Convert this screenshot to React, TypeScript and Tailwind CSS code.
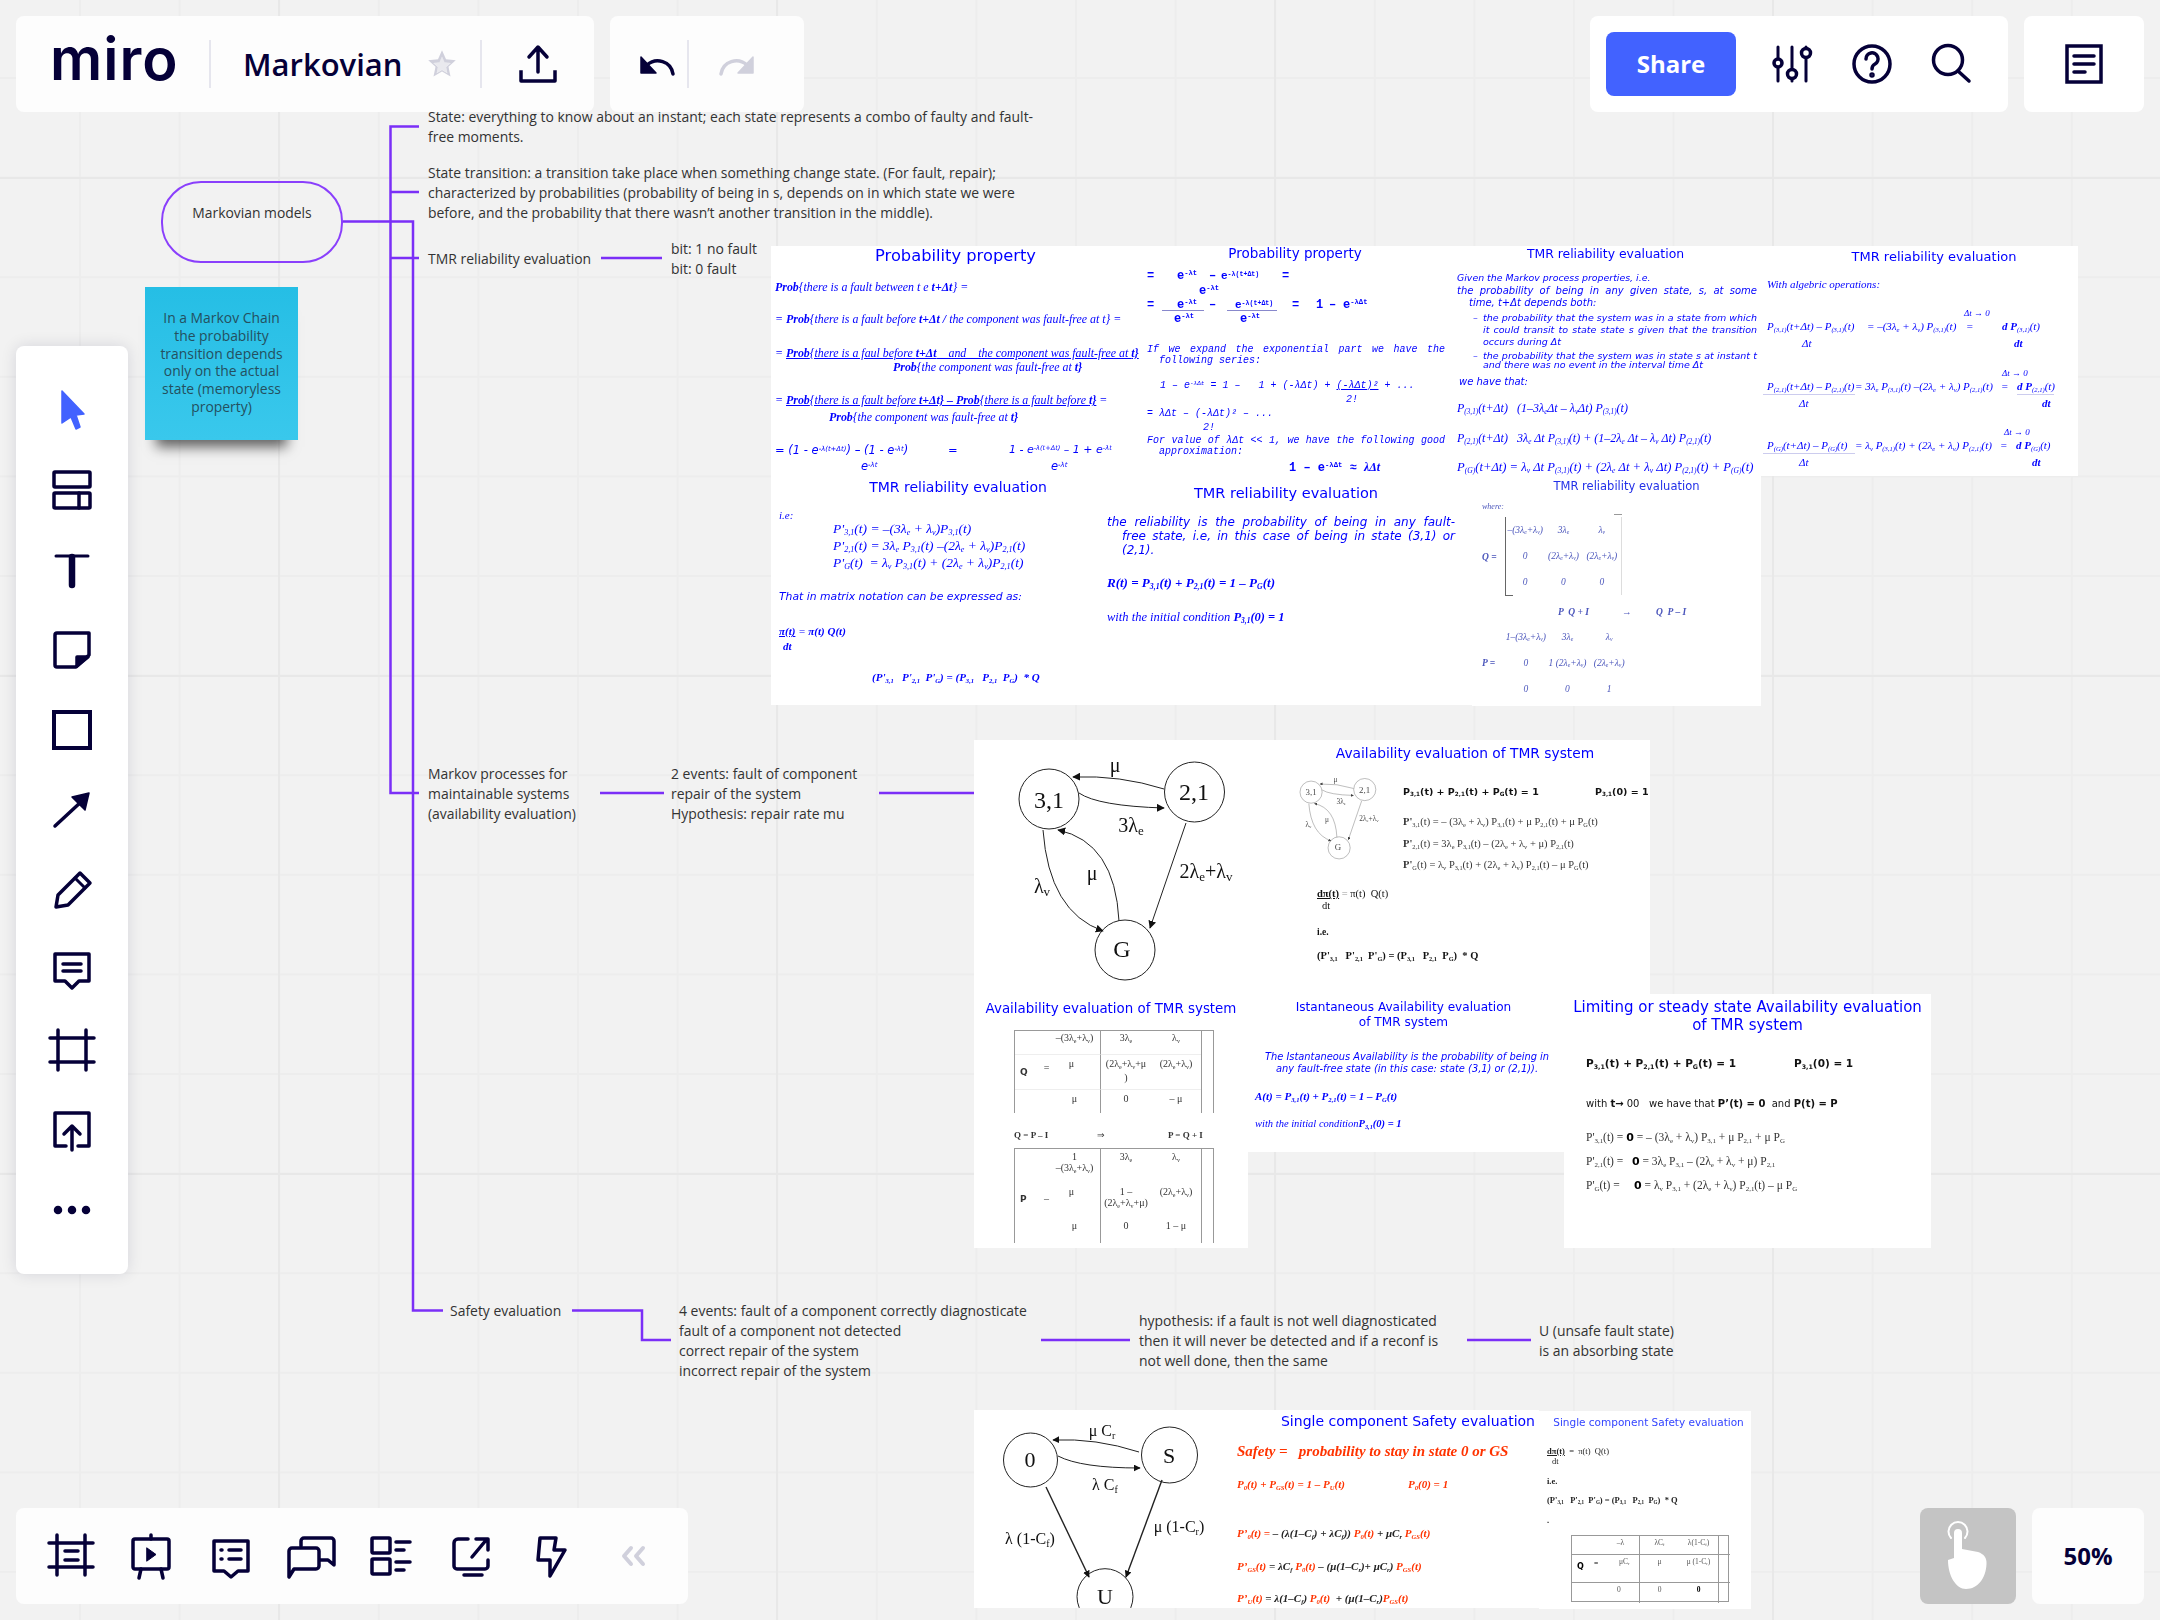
import React from "react";

const NAVY = "#050038";
const GREY = "#d0d0dc";

const Icon = ({ children, stroke = NAVY, className = "h-10 w-10" }: { children: React.ReactNode; stroke?: string; className?: string }) => (
  <svg viewBox="0 0 40 40" className={`shrink-0 overflow-visible ${className}`} fill="none" stroke={stroke} strokeWidth="3.5" strokeLinecap="round" strokeLinejoin="round">
    {children}
  </svg>
);

const Slide = ({ className, inner = "", children }: { className: string; inner?: string; children: React.ReactNode }) => (
  <div className={`absolute overflow-hidden bg-white ${className}`}>
    <div className={`flex h-full flex-col whitespace-pre text-[#0000ff] blur-[0.3px] [&_sub]:text-[60%] [&_sup]:text-[60%] ${inner}`}>{children}</div>
  </div>
);

const Title = ({ className, children }: { className: string; children: React.ReactNode }) => (
  <p className={`text-center font-['DejaVu_Sans',sans-serif] ${className}`}>{children}</p>
);

const Graph = () => (
  <>
    <defs>
      <marker id="tip" viewBox="0 0 10 10" refX="9" refY="5" markerWidth="8" markerHeight="8" markerUnits="userSpaceOnUse" orient="auto">
        <path d="M0 0L10 5L0 10Z" fill="#111" />
      </marker>
    </defs>
    <g fill="none" stroke="#222" strokeWidth="1">
      <circle cx="1049" cy="799" r="30" />
      <circle cx="1194.5" cy="792" r="30" />
      <circle cx="1125" cy="950" r="30" />
      <path d="M1164 789Q1120 775 1073 777" markerEnd="url(#tip)" />
      <path d="M1079 793Q1098 806 1164 808" markerEnd="url(#tip)" />
      <path d="M1119 921Q1115 842 1058 830" markerEnd="url(#tip)" />
      <path d="M1043 830Q1049 912 1103 931" markerEnd="url(#tip)" />
      <path d="M1186 823L1150 928" markerEnd="url(#tip)" />
    </g>
    <g fill="#111" stroke="none" className="font-['Liberation_Serif',serif]" fontSize="24" textAnchor="middle">
      <text x="1049" y="808">3,1</text>
      <text x="1194" y="800">2,1</text>
      <text x="1122" y="957">G</text>
      <text x="1115" y="772" fontSize="20">μ</text>
      <text x="1131" y="832" fontSize="20">3λ<tspan fontSize="13" dy="3">e</tspan></text>
      <text x="1092" y="880" fontSize="20">μ</text>
      <text x="1042" y="893" fontSize="20">λ<tspan fontSize="13" dy="3">v</tspan></text>
      <text x="1206" y="878" fontSize="20">2λ<tspan fontSize="13" dy="3">e</tspan><tspan dy="-3">+λ</tspan><tspan fontSize="13" dy="3">v</tspan></text>
    </g>
  </>
);

const SafetyGraph = () => (
  <svg viewBox="974 1410 256 198" className="absolute left-0 top-0 h-[198px] w-[256px]">
    <defs>
      <marker id="tip2" viewBox="0 0 10 10" refX="9" refY="5" markerWidth="7" markerHeight="7" markerUnits="userSpaceOnUse" orient="auto">
        <path d="M0 0L10 5L0 10Z" fill="#111" />
      </marker>
    </defs>
    <g fill="none" stroke="#222" strokeWidth="1">
      <circle cx="1030.5" cy="1460" r="27" />
      <circle cx="1169.5" cy="1455" r="28" />
      <circle cx="1105" cy="1596.7" r="28" />
      <path d="M1139 1452Q1096 1438 1053 1440" markerEnd="url(#tip2)" />
      <path d="M1058 1456Q1081 1468 1140 1468" markerEnd="url(#tip2)" />
      <path d="M1046 1487L1089 1577" markerEnd="url(#tip2)" strokeWidth="1.4" />
      <path d="M1162 1480L1126 1577" markerEnd="url(#tip2)" strokeWidth="1.4" />
    </g>
    <g fill="#111" className="font-['Liberation_Serif',serif] font-normal not-italic" fontSize="16" textAnchor="middle">
      <text x="1030" y="1467" fontSize="22">0</text>
      <text x="1169" y="1463" fontSize="22">S</text>
      <text x="1105" y="1604" fontSize="22">U</text>
      <text x="1102" y="1436">μ C<tspan fontSize="10" dy="3">r</tspan></text>
      <text x="1105" y="1490">λ C<tspan fontSize="10" dy="3">f</tspan></text>
      <text x="1030" y="1544">λ (1-C<tspan fontSize="10" dy="3">f</tspan><tspan dy="-3">)</tspan></text>
      <text x="1179" y="1532">μ (1-C<tspan fontSize="10" dy="3">r</tspan><tspan dy="-3">)</tspan></text>
    </g>
  </svg>
);

const TableCell = ({ children, className = "" }: { children?: React.ReactNode; className?: string }) => (
  <div className={`text-center ${className}`}>{children}</div>
);

const App = () => {
  return (
    <div className="relative h-[1620px] w-[2160px] overflow-hidden bg-[#f2f2f2] font-['Open_Sans',sans-serif] [background-image:linear-gradient(90deg,#e8e8e8_2px,transparent_2px),linear-gradient(#e8e8e8_2px,transparent_2px),linear-gradient(90deg,#ededed_2px,transparent_2px),linear-gradient(#ededed_2px,transparent_2px)] [background-size:498px_498px,498px_498px,99.6px_99.6px,99.6px_99.6px] [background-position:278px_177px,278px_177px,79px_77px,79px_77px]">
      {/* connectors of the mind map */}
      <svg viewBox="0 0 2160 1620" className="absolute left-0 top-0 h-[1620px] w-[2160px]" fill="none" stroke="#7b2ff7" strokeWidth="2.5">
        <path d="M419 126.5H390.5V793H419M390.5 192H419M390.5 258H419" />
        <path d="M343 221.5H413V1310.5H443" />
        <path d="M601 258H662M600 793H664M879 793H974" />
        <path d="M572 1310.5H642V1340H671M1041 1340H1130M1467 1340H1531" />
      </svg>

      {/* mind map nodes */}
      <div className="absolute left-[161px] top-[181px] h-[82px] w-[182px] rounded-[40px] border-[2.5px] border-[#8a3ffc] pt-[20px] text-center text-[13.9px] leading-5 text-[#333]">
        Markovian models
      </div>
      <div className="absolute left-[145px] top-[287px] h-[153px] w-[153px] bg-gradient-to-b from-[#25bee5] to-[#39c8ec] px-2 pt-[22px] text-center text-[13.9px] leading-[17.8px] text-[#24505f] shadow-[0_18px_12px_-11px_rgba(0,0,0,0.6)]">
        In a Markov Chain the probability transition depends only on the actual state (memoryless property)
      </div>
      <div className="text-[13.95px] leading-5 text-[#333]">
        <p className="absolute left-[428px] top-[107px] whitespace-nowrap">State: everything to know about an instant; each state represents a combo of faulty and fault-<br />free moments.</p>
        <p className="absolute left-[428px] top-[163px] whitespace-nowrap">State transition: a transition take place when something change state. (For fault, repair);<br />characterized by probabilities (probability of being in s, depends on in which state we were<br />before, and the probability that there wasn’t another transition in the middle).</p>
        <p className="absolute left-[428px] top-[249px] whitespace-nowrap">TMR reliability evaluation</p>
        <p className="absolute left-[671px] top-[239px] whitespace-nowrap">bit: 1 no fault<br />bit: 0 fault</p>
        <p className="absolute left-[428px] top-[764px] whitespace-nowrap">Markov processes for<br />maintainable systems<br />(availability evaluation)</p>
        <p className="absolute left-[671px] top-[764px] whitespace-nowrap">2 events: fault of component<br />repair of the system<br />Hypothesis: repair rate mu</p>
        <p className="absolute left-[450px] top-[1301px] whitespace-nowrap">Safety evaluation</p>
        <p className="absolute left-[679px] top-[1301px] whitespace-nowrap">4 events: fault of a component correctly diagnosticate<br />fault of a component not detected<br />correct repair of the system<br />incorrect repair of the system</p>
        <p className="absolute left-[1139px] top-[1311px] whitespace-nowrap">hypothesis: if a fault is not well diagnosticated<br />then it will never be detected and if a reconf is<br />not well done, then the same</p>
        <p className="absolute left-[1539px] top-[1321px] whitespace-nowrap">U (unsafe fault state)<br />is an absorbing state</p>
      </div>

      {/* Probability property */}
      <Slide className="left-[771px] top-[246px] h-[234px] w-[369px]" inner="font-['Liberation_Serif',serif] italic text-[11.9px]">
        <Title className="h-5 text-[16.3px] leading-5 not-italic">Probability property</Title>
        <p className="ml-1 mt-[14px] h-[14px] leading-[14px]"><b>Prob</b>{"{there is a fault between t e "}<b>t+Δt</b>{"} ="}</p>
        <p className="ml-1 mt-[18px] h-[14px] leading-[14px]">= <b>Prob</b>{"{there is a fault before "}<b>t+Δt / </b>{"the component was fault-free at t} ="}</p>
        <p className="ml-1 mt-[20px] h-[14px] leading-[14px]">= <span className="underline"><b>Prob</b>{"{there is a faul before "}<b>t+Δt</b>{"    and    the component was fault-free at "}<b>{"t}"}</b></span></p>
        <p className="ml-[122px] h-[14px] leading-[14px]"><b>Prob</b>{"{the component was fault-free at "}<b>{"t}"}</b></p>
        <p className="ml-1 mt-[19px] h-[14px] leading-[14px]">= <span className="underline"><b>Prob</b>{"{there is a fault before "}<b>{"t+Δt} – Prob"}</b>{"{there is a fault before "}<b>{"t}"}</b></span> =</p>
        <p className="ml-[58px] mt-[3px] h-[14px] leading-[14px]"><b>Prob</b>{"{the component was fault-free at "}<b>{"t}"}</b></p>
        <div className="ml-1 mt-[19px] flex h-[14px] font-['DejaVu_Sans',sans-serif] text-[11.5px] leading-[14px]">
          <span className="w-[173px]">= (1 - e<sup>-λ(t+Δt)</sup>) – (1 - e<sup>-λt</sup>)</span>
          <span className="w-[61px]">=</span>
          <span className="text-[11px]">1 - e<sup>-λ(t+Δt)</sup> – 1 + e<sup>-λt</sup></span>
        </div>
        <div className="ml-[90px] mt-[2px] flex h-[14px] font-['DejaVu_Sans',sans-serif] text-[11.5px] leading-[14px]">
          <span className="w-[190px]">e<sup>-λt</sup></span>
          <span>e<sup>-λt</sup></span>
        </div>
      </Slide>

      <Slide className="left-[1140px] top-[246px] h-[234px] w-[310px]" inner="pl-[7px] font-['Liberation_Mono',monospace] italic text-[10px]">
        <Title className="-ml-[7px] h-[14px] text-[13.5px] leading-[14px] not-italic">Probability property</Title>
        <div className="mt-[10px] flex h-3 text-[12px] font-bold leading-3 not-italic">
          <span className="w-[30px]">=</span><span className="w-[32px]">e<sup>-λt</sup></span><span className="w-[12px]">–</span><span className="w-[61px] text-[11px]">e<sup>-λ(t+Δt)</sup></span><span>=</span>
        </div>
        <p className="ml-[52px] mt-[3px] h-3 text-[12px] font-bold leading-3 not-italic">e<sup>-λt</sup></p>
        <div className="mt-[2px] flex h-3 text-[12px] font-bold leading-3 not-italic">
          <span className="w-[15px]">=</span><span className="w-[42px] border-b border-[#8888cc] pl-[15px]">e<sup>-λt</sup></span><span className="w-[23px] pl-[5px]">–</span><span className="w-[50px] border-b border-[#8888cc] pl-[8px] text-[11px]">e<sup>-λ(t+Δt)</sup></span><span className="w-[15px] pl-[15px]" /><span className="w-[24px]">=</span><span className="w-[13px]">1</span><span className="w-[14px]">–</span><span>e<sup>-λΔt</sup></span>
        </div>
        <div className="mt-[2px] flex h-3 text-[12px] font-bold leading-3 not-italic">
          <span className="ml-[27px] w-[66px]">e<sup>-λt</sup></span><span>e<sup>-λt</sup></span>
        </div>
        <p className="mt-[19px] h-3 w-[298px] whitespace-normal leading-3 [text-align-last:justify]">If we expand the exponential part we have the</p>
        <p className="-mt-px ml-3 h-3 leading-3">following series:</p>
        <p className="ml-[13px] mt-[13px] h-3 leading-3">1 – e<sup>-λΔt</sup> = 1 –   1 + (-λΔt) + <span className="underline">(-λΔt)²</span> + ...</p>
        <p className="ml-[199px] mt-[2px] h-3 leading-3">2!</p>
        <p className="mt-[2px] h-3 leading-3">= λΔt – (-λΔt)² – ...</p>
        <p className="ml-14 mt-[2px] h-3 leading-3">2!</p>
        <p className="mt-px h-3 w-[298px] whitespace-normal leading-3 [text-align-last:justify]">For value of λΔt &lt;&lt; 1, we have the following good</p>
        <p className="-mt-px ml-3 h-3 leading-3">approximation:</p>
        <p className="ml-[142px] mt-[3px] h-3 text-[12px] font-bold leading-3 not-italic">1 – e<sup>-λΔt</sup> ≈ <span className="font-['Liberation_Serif',serif] italic">λΔt</span></p>
      </Slide>

      <Slide className="left-[1450px] top-[246px] h-[234px] w-[311px]" inner="pl-[7px] font-['DejaVu_Sans',sans-serif] italic text-[9.5px]">
        <Title className="-ml-[7px] h-[15px] text-[12.4px] leading-[15px] not-italic">TMR reliability evaluation</Title>
        <p className="mt-[11px] h-3 text-[9.4px] leading-3">Given the Markov process properties, i.e.</p>
        <p className="mt-px h-3 w-[300px] whitespace-normal text-[10px] leading-3 [text-align-last:justify]">the probability of being in any given state, s, at some</p>
        <p className="ml-3 h-3 text-[10px] leading-3">time, t+Δt depends both:</p>
        <p className="ml-[16px] mt-[3px] flex h-3 w-[284px] whitespace-normal leading-3"><span className="w-[10px]">–</span><span className="flex-1 [text-align-last:justify]">the probability that the system was in a state from which</span></p>
        <p className="ml-[26px] h-3 w-[274px] whitespace-normal leading-3 [text-align-last:justify]">it could transit to state state s given that the transition</p>
        <p className="ml-[26px] h-3 leading-3">occurs during Δt</p>
        <p className="ml-[16px] mt-[2px] flex h-3 w-[284px] whitespace-normal leading-3"><span className="w-[10px]">–</span><span className="flex-1 [text-align-last:justify]">the probability that the system was in state s at instant t</span></p>
        <p className="ml-[26px] -mt-[3px] h-3 leading-3">and there was no event in the interval time Δt</p>
        <p className="ml-[2px] mt-[5px] h-3 text-[10px] leading-3">we have that:</p>
        <div className="font-['Liberation_Serif',serif] text-[12px]">
          <p className="mt-[13px] h-[14px] leading-[14px]">P<sub>(3,1)</sub>(t+Δt)   (1–3λ<sub>e</sub>Δt – λ<sub>v</sub>Δt) P<sub>(3,1)</sub>(t)</p>
          <p className="mt-[16px] h-[14px] leading-[14px]">P<sub>(2,1)</sub>(t+Δt)   3λ<sub>e</sub> Δt P<sub>(3,1)</sub>(t) + (1–2λ<sub>e</sub> Δt – λ<sub>v</sub> Δt) P<sub>(2,1)</sub>(t)</p>
          <p className="mt-[15px] h-[14px] text-[12.6px] leading-[14px]">P<sub>(G)</sub>(t+Δt) = λ<sub>v</sub> Δt P<sub>(3,1)</sub>(t) + (2λ<sub>e</sub> Δt + λ<sub>v</sub> Δt) P<sub>(2,1)</sub>(t) + P<sub>(G)</sub>(t)</p>
        </div>
      </Slide>

      <Slide className="left-[1761px] top-[246px] h-[230px] w-[317px]" inner="pl-[6px] font-['Liberation_Serif',serif] italic text-[11px]">
        <Title className="mt-1 h-[14px] pl-[23px] text-[13px] leading-[14px] not-italic">TMR reliability evaluation</Title>
        <p className="mt-[14px] h-3 leading-3">With algebric operations:</p>
        <p className="ml-[197px] mt-[18px] h-[10px] text-[9px] leading-[10px]">Δt → 0</p>
        <div className="mt-[2px] flex h-3 leading-3">
          <span className="w-[100px]">P<sub>(3,1)</sub>(t+Δt) – P<sub>(3,1)</sub>(t)</span><span className="w-[99px]">= –(3λ<sub>e</sub> + λ<sub>v</sub>) P<sub>(3,1)</sub>(t)</span><span className="w-[36px]">=</span><span><b>d P</b><sub>(3,1)</sub>(t)</span>
        </div>
        <div className="mt-[5px] flex h-3 font-bold leading-3"><span className="ml-[35px] w-[212px] font-normal">Δt</span><span>dt</span></div>
        <p className="ml-[235px] mt-[19px] h-[10px] text-[9px] leading-[10px]">Δt → 0</p>
        <div className="mt-[2px] flex h-[15px] leading-3">
          <span className="-ml-[4px] w-[92px] border-b border-[#ccccee] pl-[4px]">P<sub>(2,1)</sub>(t+Δt) – P<sub>(2,1)</sub>(t)</span><span className="w-[146px]">= 3λ<sub>e</sub> P<sub>(3,1)</sub>(t) –(2λ<sub>e</sub> + λ<sub>v</sub>) P<sub>(2,1)</sub>(t)</span><span className="w-[16px]">=</span><span className="w-[37px] border-b border-[#ccccee]"><b>d P</b><sub>(2,1)</sub>(t)</span>
        </div>
        <div className="mt-[2px] flex h-3 font-bold leading-3"><span className="ml-[32px] w-[243px] font-normal">Δt</span><span>dt</span></div>
        <p className="ml-[237px] mt-[18px] h-[10px] text-[9px] leading-[10px]">Δt → 0</p>
        <div className="mt-[2px] flex h-[15px] leading-3">
          <span className="-ml-[4px] w-[92px] border-b border-[#ccccee] pl-[4px]">P<sub>(G)</sub>(t+Δt) – P<sub>(G)</sub>(t)</span><span className="w-[145px]">= λ<sub>v</sub> P<sub>(3,1)</sub>(t) + (2λ<sub>e</sub> + λ<sub>v</sub>) P<sub>(2,1)</sub>(t)</span><span className="w-[16px]">=</span><span><b>d P</b><sub>(G)</sub>(t)</span>
        </div>
        <div className="mt-[2px] flex h-3 font-bold leading-3"><span className="ml-[32px] w-[233px] font-normal">Δt</span><span>dt</span></div>
      </Slide>

      {/* TMR reliability evaluation, second row */}
      <Slide className="left-[771px] top-[480px] h-[225px] w-[329px]" inner="pl-2 font-['Liberation_Serif',serif] italic text-[13.5px]">
        <Title className="-ml-2 h-[14px] pl-[45px] text-[14px] leading-[14px] not-italic">TMR reliability evaluation</Title>
        <p className="mt-[15px] h-3 text-[11px] leading-3">i.e:</p>
        <div className="ml-[54px]">
          <p className="h-4 leading-4">P'<sub>3,1</sub>(t) = –(3λ<sub>e</sub> + λ<sub>v</sub>)P<sub>3,1</sub>(t)</p>
          <p className="mt-px h-4 leading-4">P'<sub>2,1</sub>(t) = 3λ<sub>e</sub> P<sub>3,1</sub>(t) –(2λ<sub>e</sub> + λ<sub>v</sub>)P<sub>2,1</sub>(t)</p>
          <p className="mt-px h-4 leading-4">P'<sub>G</sub>(t)  = λ<sub>v</sub> P<sub>3,1</sub>(t) + (2λ<sub>e</sub> + λ<sub>v</sub>)P<sub>2,1</sub>(t)</p>
        </div>
        <p className="mt-[20px] h-3 font-['DejaVu_Sans',sans-serif] text-[10.8px] leading-3">That in matrix notation can be expressed as:</p>
        <p className="mt-[22px] h-3 text-[11px] font-bold leading-3"><span className="underline">π(t)</span> <span className="font-normal">=</span> π(t) Q(t)</p>
        <p className="ml-1 mt-[3px] h-3 text-[11px] font-bold leading-3">dt</p>
        <p className="ml-[93px] mt-[19px] h-3 text-[11px] font-bold leading-3">(P'<sub>3,1</sub>   P'<sub>2,1</sub>  P'<sub>G</sub>) = (P<sub>3,1</sub>   P<sub>2,1</sub>  P<sub>G</sub>)  * Q</p>
      </Slide>

      <Slide className="left-[1100px] top-[480px] h-[225px] w-[372px]" inner="pl-[7px] font-['DejaVu_Sans',sans-serif] italic text-[12px]">
        <Title className="-ml-[7px] mt-[5px] h-4 text-[14.5px] leading-4 not-italic">TMR reliability evaluation</Title>
        <p className="mt-[14px] h-[14px] w-[348px] whitespace-normal leading-[14px] [text-align-last:justify]">the reliability is the probability of being in any fault-</p>
        <p className="ml-[15px] h-[14px] w-[333px] whitespace-normal leading-[14px] [text-align-last:justify]">free state, i.e, in this case of being in state (3,1) or</p>
        <p className="ml-[15px] h-[14px] leading-[14px]">(2,1).</p>
        <p className="mt-[19px] h-[14px] font-['Liberation_Serif',serif] text-[13px] font-bold leading-[14px]">R(t) = P<sub>3,1</sub>(t) + P<sub>2,1</sub>(t) = 1 – P<sub>G</sub>(t)</p>
        <p className="mt-[20px] h-[14px] font-['Liberation_Serif',serif] text-[12.5px] leading-[14px]">with the initial condition <b>P<sub>3,1</sub>(0) = 1</b></p>
      </Slide>

      <Slide className="left-[1472px] top-[476px] h-[230px] w-[289px]" inner="font-['Liberation_Serif',serif] italic text-[9.5px] text-[#4a55bb]">
        <Title className="mt-[3px] h-[14px] pl-5 text-[11.5px] leading-[14px] not-italic text-[#2230e8]">TMR reliability evaluation</Title>
        <p className="ml-[10px] mt-[9px] h-[10px] text-[8px] leading-[10px]">where:</p>
        <div className="ml-[10px] mt-[5px] flex h-[80px]">
          <span className="w-[23px] self-center font-bold">Q =</span>
          <div className="relative grid h-[78px] w-[117px] grid-cols-3 grid-rows-3 items-center border-l-[1.5px] border-r border-l-[#666] border-r-[#ddd] text-center">
            <span>–(3λ<sub>e</sub>+λ<sub>v</sub>)</span><span>3λ<sub>e</sub></span><span>λ<sub>v</sub></span>
            <span>0</span><span>(2λ<sub>e</sub>+λ<sub>v</sub>)</span><span>(2λ<sub>e</sub>+λ<sub>v</sub>)</span>
            <span>0</span><span>0</span><span>0</span>
            <span className="absolute -bottom-px -left-px h-px w-2 bg-[#666]" />
            <span className="absolute -right-px -top-[3px] h-px w-2 bg-[#999]" />
          </div>
        </div>
        <div className="ml-[86px] mt-[9px] flex h-3 font-bold leading-3">
          <span className="w-[64px]">P  Q + I</span><span className="w-[34px] font-normal">→</span><span>Q  P – I</span>
        </div>
        <div className="ml-[10px] mt-[6px] flex h-[78px]">
          <span className="w-[23px] self-center font-bold">P =</span>
          <div className="relative grid h-[78px] w-[125px] grid-cols-3 grid-rows-3 items-center text-center">
            <span>1–(3λ<sub>e</sub>+λ<sub>v</sub>)</span><span>3λ<sub>e</sub></span><span>λ<sub>v</sub></span>
            <span>0</span><span>1 (2λ<sub>e</sub>+λ<sub>v</sub>)</span><span>(2λ<sub>e</sub>+λ<sub>v</sub>)</span>
            <span>0</span><span>0</span><span>1</span>
          </div>
        </div>
      </Slide>

      {/* Availability evaluation */}
      <Slide className="left-[974px] top-[740px] h-[254px] w-[266px]" inner="">
        <svg viewBox="974 740 266 254" className="h-[254px] w-[266px]"><Graph /></svg>
      </Slide>
      <Slide className="left-[1240px] top-[740px] h-[254px] w-[410px]" inner="font-['DejaVu_Sans',sans-serif] text-[#111]">
        <Title className="mt-[5px] h-4 pl-10 text-[13.8px] leading-4 text-[#0000ff]">Availability evaluation of TMR system</Title>
        <p className="ml-[163px] mt-[25px] flex h-3 text-[9.5px] font-bold leading-3"><span className="w-[192px]">P<sub>3,1</sub>(t) + P<sub>2,1</sub>(t) + P<sub>G</sub>(t) = 1</span><span>P<sub>3,1</sub>(0) = 1</span></p>
        <div className="ml-[163px] font-['Liberation_Serif',serif] text-[10.5px] text-[#333]">
          <p className="mt-[18px] h-3 leading-3"><b>P'</b><sub>3,1</sub>(t) = – (3λ<sub>e</sub> + λ<sub>v</sub>) P<sub>3,1</sub>(t) + μ P<sub>2,1</sub>(t) + μ P<sub>G</sub>(t)</p>
          <p className="mt-[10px] h-3 leading-3"><b>P'</b><sub>2,1</sub>(t) = 3λ<sub>e</sub> P<sub>3,1</sub>(t) – (2λ<sub>e</sub> + λ<sub>v</sub> + μ) P<sub>2,1</sub>(t)</p>
          <p className="mt-[9px] h-3 leading-3"><b>P'</b><sub>G</sub>(t) = λ<sub>v</sub> P<sub>3,1</sub>(t) + (2λ<sub>e</sub> + λ<sub>v</sub>) P<sub>2,1</sub>(t) – μ P<sub>G</sub>(t)</p>
        </div>
        <div className="ml-[77px] font-['Liberation_Serif',serif] text-[10.5px] font-bold">
          <p className="mt-[17px] h-3 leading-3"><span className="underline">dπ(t)</span> <span className="font-normal text-[#999]">=</span> <span className="font-normal">π(t)  Q(t)</span></p>
          <p className="ml-[5px] h-3 font-normal leading-3">dt</p>
          <p className="mt-[14px] h-3 text-[9.5px] leading-3">i.e.</p>
          <p className="mt-3 h-3 leading-3">(P'<sub>3,1</sub>   P'<sub>2,1</sub>  P'<sub>G</sub>) = (P<sub>3,1</sub>   P<sub>2,1</sub>  P<sub>G</sub>)  * Q</p>
        </div>
      </Slide>
      {/* small copy of the state graph */}
      <svg viewBox="1019 769 206 211" className="absolute left-[1300px] top-[781px] h-[78px] w-[76px] overflow-visible opacity-80">
        <Graph />
      </svg>

      <Slide className="left-[974px] top-[994px] h-[254px] w-[274px]" inner="font-['Liberation_Serif',serif] text-[10px] text-[#333]">
        <Title className="mt-[7px] h-4 text-[13.4px] leading-4 text-[#0000ff]">Availability evaluation of TMR system</Title>
        <div className="ml-10 mt-[13px] w-[200px] border-t border-[#999]">
          <div className="grid h-[82px] grid-cols-[85px_101px_14px] grid-rows-[23px_35px_24px] border-x border-[#999] leading-[14px]">
            <TableCell className="pl-[34px]">–(3λ<sub>e</sub>+λ<sub>v</sub>)</TableCell>
            <TableCell className="grid grid-cols-2 border-l border-[#999]"><span>3λ<sub>e</sub></span><span>λ<sub>v</sub></span></TableCell>
            <TableCell className="border-l border-[#999]" />
            <TableCell className="flex border-t border-[#eee] pl-[5px] pt-[2px]"><span className="mt-[8px] w-[23px] text-left font-['DejaVu_Sans',sans-serif] text-[9px] font-bold">Q</span><span className="mt-[4px] w-[7px]">=</span><span className="w-[24px] text-right">μ</span></TableCell>
            <TableCell className="grid grid-cols-2 border-l border-t border-[#eee] border-l-[#999] pt-[2px]"><span>(2λ<sub>e</sub>+λ<sub>v</sub>+μ<br />)</span><span>(2λ<sub>e</sub>+λ<sub>v</sub>)</span></TableCell>
            <TableCell className="border-l border-[#999]" />
            <TableCell className="border-t border-[#eee] pl-[34px] pt-[2px]">μ</TableCell>
            <TableCell className="grid grid-cols-2 border-l border-t border-[#eee] border-l-[#999] pt-[2px]"><span>0</span><span>– μ</span></TableCell>
            <TableCell className="border-l border-[#999]" />
          </div>
        </div>
        <div className="ml-10 mt-[16px] flex h-3 font-bold leading-3 text-[9px]"><span className="w-[83px]">Q = P – I</span><span className="w-[71px] font-normal">⇒</span><span>P = Q + I</span></div>
        <div className="ml-10 mt-[7px] w-[200px] border-t border-[#999]">
          <div className="grid h-[94px] grid-cols-[85px_101px_14px] grid-rows-[35px_34px_25px] border-x border-[#999] leading-[11px]">
            <TableCell className="pl-[34px] pt-[2px]">1<br />–(3λ<sub>e</sub>+λ<sub>v</sub>)</TableCell>
            <TableCell className="grid grid-cols-2 border-l border-[#999] pt-[2px]"><span>3λ<sub>e</sub></span><span>λ<sub>v</sub></span></TableCell>
            <TableCell className="border-l border-[#999]" />
            <TableCell className="flex pl-[5px] pt-[2px]"><span className="mt-[8px] w-[23px] text-left font-['DejaVu_Sans',sans-serif] text-[9px] font-bold">P</span><span className="mt-[7px] w-[7px]">–</span><span className="w-[24px] text-right">μ</span></TableCell>
            <TableCell className="grid grid-cols-2 border-l border-[#999] pt-[2px]"><span>1 –<br />(2λ<sub>e</sub>+λ<sub>v</sub>+μ)</span><span>(2λ<sub>e</sub>+λ<sub>v</sub>)</span></TableCell>
            <TableCell className="border-l border-[#999]" />
            <TableCell className="pl-[34px] pt-[2px]">μ</TableCell>
            <TableCell className="grid grid-cols-2 border-l border-[#999] pt-[2px]"><span>0</span><span>1 – μ</span></TableCell>
            <TableCell className="border-l border-[#999]" />
          </div>
        </div>
      </Slide>

      <Slide className="left-[1248px] top-[994px] h-[158px] w-[316px]" inner="font-['DejaVu_Sans',sans-serif]">
        <Title className="mt-[6px] h-[29px] pr-[5px] text-[12.1px] leading-[14.5px]">Istantaneous Availability evaluation<br />of TMR system</Title>
        <p className="ml-[7px] mt-[22px] w-[304px] text-center text-[9.85px] italic leading-3">The Istantaneous Availability is the probability of being in<br />any fault-free state (in this case: state (3,1) or (2,1)).</p>
        <p className="ml-[7px] mt-[14px] h-[14px] font-['Liberation_Serif',serif] text-[11px] font-bold italic leading-[14px]">A(t) = P<sub>3,1</sub>(t) + P<sub>2,1</sub>(t) = 1 – P<sub>G</sub>(t)</p>
        <p className="ml-[7px] mt-[14px] h-[14px] font-['Liberation_Serif',serif] text-[10.5px] italic leading-[14px]">with the initial condition<b>P<sub>3,1</sub>(0) = 1</b></p>
      </Slide>

      <Slide className="left-[1564px] top-[994px] h-[254px] w-[367px]" inner="font-['DejaVu_Sans',sans-serif] text-[#111]">
        <Title className="mt-1 h-9 text-[15px] leading-[18px] text-[#0000ff]">Limiting or steady state Availability evaluation<br />of TMR system</Title>
        <p className="ml-[22px] mt-[22px] flex h-[14px] text-[10.5px] font-bold leading-[14px]"><span className="w-[208px]">P<sub>3,1</sub>(t) + P<sub>2,1</sub>(t) + P<sub>G</sub>(t) = 1</span><span>P<sub>3,1</sub>(0) = 1</span></p>
        <p className="ml-[22px] mt-[27px] h-[14px] text-[10px] leading-[14px]">with <b>t→</b> 00   we have that <b>P’(t) = 0</b>  and <b>P(t) = P</b></p>
        <div className="ml-[22px] font-['Liberation_Serif',serif] text-[11.5px] text-[#333]">
          <p className="mt-[19px] h-[14px] leading-[14px]">P'<sub>3,1</sub>(t) = <b className="font-['DejaVu_Sans',sans-serif] text-[11px] text-black">0</b> = – (3λ<sub>e</sub> + λ<sub>v</sub>) P<sub>3,1</sub> + μ P<sub>2,1</sub> + μ P<sub>G</sub></p>
          <p className="mt-[10px] h-[14px] leading-[14px]">P'<sub>2,1</sub>(t) =   <b className="font-['DejaVu_Sans',sans-serif] text-[11px] text-black">0</b> = 3λ<sub>e</sub> P<sub>3,1</sub> – (2λ<sub>e</sub> + λ<sub>v</sub> + μ) P<sub>2,1</sub></p>
          <p className="mt-[10px] h-[14px] leading-[14px]">P'<sub>G</sub>(t) =     <b className="font-['DejaVu_Sans',sans-serif] text-[11px] text-black">0</b> = λ<sub>v</sub> P<sub>3,1</sub> + (2λ<sub>e</sub> + λ<sub>v</sub>) P<sub>2,1</sub>(t) – μ P<sub>G</sub></p>
        </div>
      </Slide>

      {/* Safety evaluation */}
      <Slide className="left-[974px] top-[1410px] h-[198px] w-[565px]" inner="pl-[263px] font-['Liberation_Serif',serif] font-bold italic text-[11px] text-[#ff3300]">
        <SafetyGraph />
        <Title className="mt-[3px] h-4 w-[302px] pl-10 text-[14px] font-normal leading-4 not-italic text-[#0000ff]">Single component Safety evaluation</Title>
        <p className="mt-[14px] h-4 text-[15px] leading-4">Safety =   probability to stay in state 0 or GS</p>
        <p className="mt-[18px] flex h-[14px] leading-[14px]"><span className="w-[171px]">P<sub>0</sub>(t) + P<sub>GS</sub>(t) = 1 – P<sub>U</sub>(t)</span><span>P<sub>0</sub>(0) = 1</span></p>
        <p className="mt-[35px] h-[14px] leading-[14px]">P’<sub>0</sub>(t) = <span className="text-[#222]">– (λ(1–C<sub>f</sub>) + λC<sub>f</sub>))</span> P<sub>0</sub>(t) <span className="text-[#222]">+ μC<sub>r</sub></span> P<sub>GS</sub>(t)</p>
        <p className="mt-[19px] h-[14px] leading-[14px]">P’<sub>GS</sub>(t) <span className="text-[#222]">= λC<sub>f</sub></span> P<sub>0</sub>(t) <span className="text-[#222]">– (μ(1–C<sub>r</sub>)+ μC<sub>r</sub>)</span> P<sub>GS</sub>(t)</p>
        <p className="mt-[18px] h-[14px] leading-[14px]">P’<sub>U</sub>(t) <span className="text-[#222]">= λ(1–C<sub>f</sub>)</span> P<sub>0</sub>(t)  <span className="text-[#222]">+ (μ(1–C<sub>r</sub>)</span>P<sub>GS</sub>(t)</p>
      </Slide>

      <Slide className="left-[1539px] top-[1411px] h-[198px] w-[212px]" inner="pl-2 font-['Liberation_Serif',serif] text-[8.5px] font-bold text-[#222]">
        <Title className="-ml-2 mt-1 h-[14px] pl-[7px] text-[10.5px] font-normal leading-[14px] text-[#3344ff]">Single component Safety evaluation</Title>
        <p className="mt-[16.7px] h-[10px] leading-[10px]"><span className="underline">dπ(t)</span>  =  <span className="font-normal">π(t)  Q(t)</span></p>
        <p className="ml-[5px] h-[10px] font-normal leading-[10px]">dt</p>
        <p className="mt-[10px] h-[10px] leading-[10px]">i.e.</p>
        <p className="mt-[9px] h-[10px] leading-[10px]">(P'<sub>3,1</sub>   P'<sub>2,1</sub>  P'<sub>G</sub>) = (P<sub>3,1</sub>   P<sub>2,1</sub>  P<sub>G</sub>)  * Q</p>
        <p className="mt-[10px] h-[10px] leading-[10px]">.</p>
        <div className="ml-[24px] mt-[10px] grid h-[67px] w-[158px] grid-cols-[67px_79px_12px] grid-rows-[19px_28px_20px] border border-[#999] text-[7.5px] font-normal leading-[13px] text-[#555]">
          <div className="border-b border-[#999] pl-[30px] text-center">–λ</div>
          <div className="grid grid-cols-2 border-b border-l border-[#999] text-center"><span>λC<sub>f</sub></span><span>λ(1-C<sub>f</sub>)</span></div>
          <div className="border-b border-l border-[#999]" />
          <div className="flex border-b border-[#999] pl-[5px] font-bold text-black"><span className="mt-[5px] w-[17px] font-['DejaVu_Sans',sans-serif] text-[8px]">Q</span><span className="mt-[2px] w-[25px]">=</span><span className="font-normal text-[#555]">μC<sub>r</sub></span></div>
          <div className="grid grid-cols-2 border-b border-l border-[#999] text-center"><span>μ</span><span>μ (1-C<sub>r</sub>)</span></div>
          <div className="border-b border-l border-[#999]" />
          <div className="pl-[45px]">0</div>
          <div className="grid grid-cols-2 border-l border-[#999] text-center"><span>0</span><span className="font-bold text-black">0</span></div>
          <div className="border-l border-[#999]" />
        </div>
      </Slide>

      {/* board title */}
      <div className="absolute left-4 top-4 flex h-24 w-[578px] items-center rounded-lg bg-[#fdfdfd] pl-[34px] text-[#050038]">
        <span className="w-[126px] -translate-y-[5px] font-['Inter',sans-serif] text-[58px] font-semibold leading-none tracking-[1px]">miro</span>
        <span className="ml-[33px] h-12 w-0.5 bg-[#e6e6ee]" />
        <span className="ml-[32px] w-[162px] text-[31px] font-semibold">Markovian</span>
        <svg viewBox="0 0 24 24" className="ml-[22px] h-[30px] w-[30px]" fill={GREY}>
          <path d="M12 1l3.2 7.2 7.8.8-5.8 5.2 1.6 7.8L12 18l-6.8 4 1.6-7.8L1 9l7.8-.8zM12 6l-2 4.6-5 .5 3.7 3.3-1 5L12 16.8l4.3 2.6-1-5 3.7-3.3-5-.5z" fillRule="evenodd" />
          <path d="M12 5.5l-2 4.8-5 .6 3.8 3.2-1 5L12 16.6l4.2 2.5-1-5 3.8-3.2-5-.6z" opacity="0.45" />
        </svg>
        <span className="ml-[23px] h-12 w-0.5 bg-[#e6e6ee]" />
        <Icon className="ml-[36px] h-10 w-10">
          <path d="M3 28V37H37V28" strokeLinecap="square" />
          <path d="M20 4V28M11 13L20 3L29 13" />
        </Icon>
      </div>

      <div className="absolute left-[610px] top-4 flex h-24 w-[194px] items-center rounded-lg bg-[#fdfdfd] pl-7">
        <Icon>
          <path d="M35 30C33 17 18 13 9 21" />
          <path d="M3 13V29H18Z" fill={NAVY} strokeWidth="1.5" />
        </Icon>
        <span className="ml-[9px] h-12 w-0.5 bg-[#e6e6ee]" />
        <Icon stroke={GREY} className="ml-[27px] h-10 w-10">
          <path d="M5 30C7 17 22 13 31 21" />
          <path d="M37 13V29H22Z" fill={GREY} strokeWidth="1.5" />
        </Icon>
      </div>

      {/* share and board actions */}
      <div className="absolute left-[1590px] top-4 flex h-24 w-[418px] items-center rounded-lg bg-white pl-4">
        <button className="h-16 w-[130px] rounded-lg bg-[#4262ff] text-[24px] font-bold leading-none text-white">Share</button>
        <Icon className="ml-[36px] h-10 w-10">
          <path d="M6 3V37M20 3V37M34 3V37" strokeWidth="3" />
          <circle cx="6" cy="19" r="4" fill="#fff" />
          <circle cx="20" cy="30" r="4.5" fill="#fff" />
          <circle cx="34" cy="9" r="4.5" fill="#fff" />
        </Icon>
        <Icon className="ml-[40px] h-10 w-10">
          <circle cx="20" cy="20" r="18" />
          <path d="M14 15a6 6 0 1 1 9 5c-2 1-3 2-3 5" />
          <circle cx="20" cy="31" r="1" fill={NAVY} />
        </Icon>
        <Icon className="ml-[38px] h-10 w-10">
          <circle cx="18" cy="16" r="14.5" />
          <path d="M28 27L39 37" />
        </Icon>
      </div>
      <div className="absolute left-[2024px] top-4 flex h-24 w-[120px] items-center justify-center rounded-lg bg-white">
        <Icon>
          <rect x="3" y="2" width="34" height="36" strokeLinejoin="miter" />
          <path d="M10 12H30M10 20H30M10 28H21" />
        </Icon>
      </div>

      {/* tool bar */}
      <div className="absolute left-4 top-[346px] flex w-28 flex-col items-center gap-10 rounded-lg bg-white py-11 shadow-[0_0_16px_rgba(5,0,56,0.12)]">
        <Icon stroke="#4262ff">
          <path d="M10 1L32 24L24 25L28 37L24 39L19 27L10 33Z" fill="#4262ff" strokeWidth="1.5" />
        </Icon>
        <Icon>
          <rect x="2" y="2" width="36" height="15" rx="1" />
          <rect x="2" y="23" width="36" height="15" rx="1" />
          <path d="M27 23V38" />
        </Icon>
        <Icon>
          <path d="M4 6H36" strokeWidth="3" />
          <path d="M20 7V35" strokeWidth="6.5" />
        </Icon>
        <Icon>
          <path d="M5 3H37V25L24 37H5a2 2 0 0 1-2-2V5a2 2 0 0 1 2-2Z" />
          <path d="M25 27H36L25 36Z" fill={NAVY} />
        </Icon>
        <Icon>
          <rect x="2" y="2" width="36" height="36" strokeWidth="4" strokeLinejoin="miter" />
        </Icon>
        <Icon>
          <path d="M3 36L30 11" />
          <path d="M37 3L33 20L20 7Z" fill={NAVY} strokeWidth="1.5" />
        </Icon>
        <Icon>
          <path d="M4 37L6 25L28 3L38 13L16 35Z" />
          <path d="M23 8L33 18" strokeWidth="3" />
        </Icon>
        <Icon>
          <path d="M3 4H37V31H27L20 38L13 31H3Z" />
          <path d="M11 14H29M11 21H29" />
        </Icon>
        <Icon>
          <path d="M-2 8H42M-2 32H42M6 0V40M34 0V40" />
        </Icon>
        <Icon>
          <path d="M14 36H3V3H37V36H26" />
          <path d="M20 40V16M12 24L20 16L28 24" />
        </Icon>
        <Icon>
          <circle cx="6" cy="20" r="2.5" fill={NAVY} />
          <circle cx="20" cy="20" r="2.5" fill={NAVY} />
          <circle cx="34" cy="20" r="2.5" fill={NAVY} />
        </Icon>
      </div>

      {/* bottom bar */}
      <div className="absolute left-4 top-[1508px] flex h-24 w-[672px] items-center gap-10 rounded-lg bg-[#fdfdfd] pl-[35px]">
        <Icon>
          <path d="M-2 7H42M-2 31H42M6 -1V39M34 -1V39" />
          <path d="M14 15H27M14 24H27" />
        </Icon>
        <Icon>
          <rect x="2" y="3" width="36" height="30" rx="2" />
          <path d="M20 -1V3M10 33L8 42M30 33L32 42" />
          <path d="M16 12L25 18.5L16 25Z" fill={NAVY} strokeWidth="1" />
        </Icon>
        <Icon>
          <path d="M3 5H37V35H27L20 41L13 35H3Z" />
          <path d="M18 14H30M18 23H30M10 14H11M10 23H11" />
        </Icon>
        <Icon>
          <path d="M10 10V5a3 3 0 0 1 3-3H40a3 3 0 0 1 3 3V29L37 24H29" />
          <path d="M-2 41V15a3 3 0 0 1 3-3H25a3 3 0 0 1 3 3V30a3 3 0 0 1-3 3H3Z" />
        </Icon>
        <Icon>
          <rect x="1" y="2" width="18" height="15" rx="1" />
          <rect x="1" y="23" width="18" height="15" rx="1" />
          <path d="M25 6H39M25 14H33M25 26H39M25 34H33" />
        </Icon>
        <Icon>
          <path d="M17 3H7a4 4 0 0 0-4 4V30a3 3 0 0 0 3 3H34a3 3 0 0 0 3-3V24" />
          <path d="M21 21L36 3M25 3H37V14M13 39H31" />
        </Icon>
        <Icon>
          <path d="M9 2H25L23 14H34L19 40V24H7Z" />
        </Icon>
        <Icon stroke={GREY}>
          <path d="M20 12L13 20L20 28M32 12L25 20L32 28" strokeWidth="4" />
        </Icon>
      </div>

      {/* hand and zoom */}
      <div className="absolute left-[1920px] top-[1508px] h-24 w-24 rounded-lg bg-[#c4c4c4]">
        <svg viewBox="0 0 96 96" className="h-24 w-24" fill="#fff">
          <path d="M31 30A9.5 9.5 0 1 1 45 30" fill="none" stroke="#fff" strokeWidth="2" strokeLinecap="round" />
          <path d="M34 25a4 4 0 0 1 8 0V41L58 44C64 46 67 50 66.5 56C66 70 58 81 46 81C36 81 28 68 28 52L34 50Z" />
        </svg>
      </div>
      <div className="absolute left-[2032px] top-[1508px] flex h-24 w-28 items-center justify-center rounded-lg bg-[#fdfdfd] text-[24px] font-bold text-[#050038]">
        50%
      </div>
    </div>
  );
};

export default App;
